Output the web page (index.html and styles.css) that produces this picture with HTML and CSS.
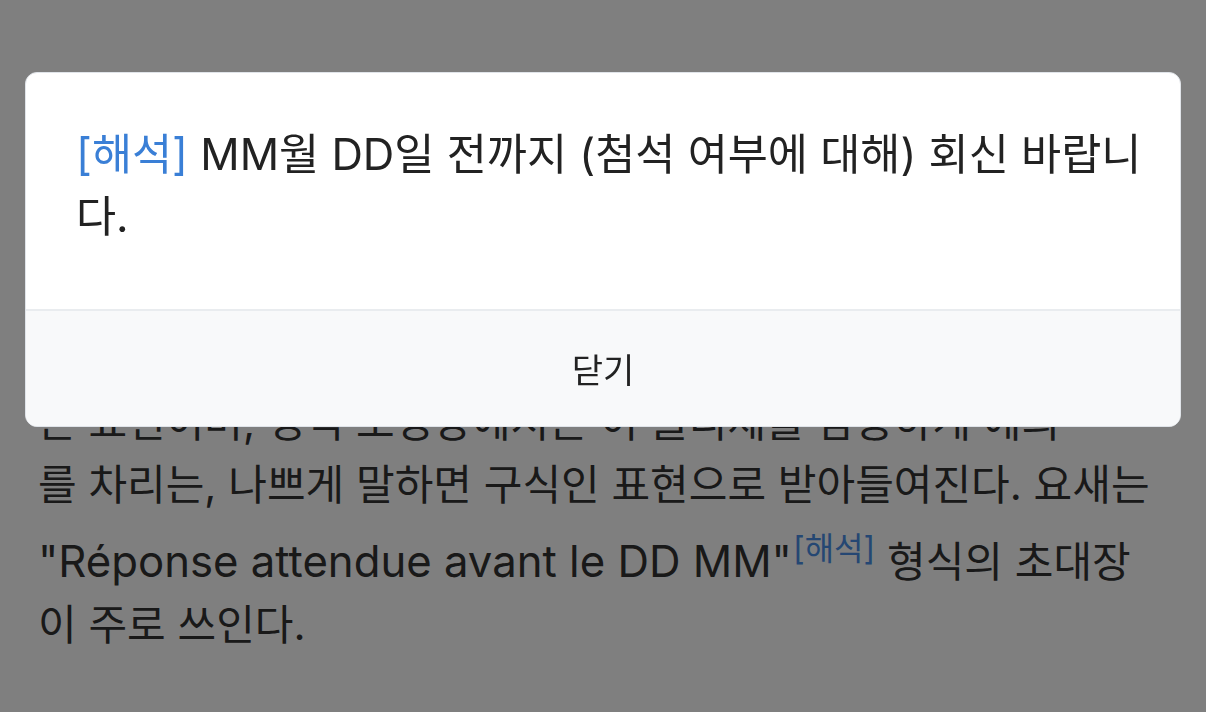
FILE: index.html
```html
<!DOCTYPE html>
<html lang="ko">

<head>
    <meta charset="UTF-8">
    <meta name="viewport" content="width=device-width, initial-scale=1.0">
    <title>RSVP</title>
    <link rel="stylesheet" href="styles.css">
</head>

<body>
    <main class="article">
        <p>영어권에서도 흔히 쓰이지만 프랑스에서는 다소 딱딱하게 느껴지</p>
        <p>는 표현이며, 정식 초청장에서는 이 클리셰를 남용하게 예의<br>를 차리는, 나쁘게 말하면 구식인 표현으로 받아들여진다. 요새는 <span lang="fr" class="fr">"Réponse attendue avant le DD MM"</span><sup><a href="#">[해석]</a></sup> 형식의 초대장이 주로 쓰인다.</p>
    </main>

    <div class="overlay">
        <div class="modal">
            <div class="modal-body">
                <p><a href="#">[해석]</a> MM월 DD일 전까지 (첨석 여부에 대해) 회신 바랍니다.</p>
            </div>
            <div class="modal-footer">
                <button>닫기</button>
            </div>
        </div>
    </div>
</body>

</html>
```

FILE: styles.css
```css
* {
    padding: 0;
    margin: 0;
    box-sizing: border-box;
}

body {
    font-family: Inter, 'Noto Sans CJK KR', sans-serif;
    background: #fff;
    color: #333;
}

a {
    color: #4a8fe6;
    text-decoration: none;
}

.article {
    padding: 327px 50px 0 38px;
}

.article p {
    font-size: 42px;
    line-height: 63px;
}

.article .fr {
    font-size: 1.04em;
}

.article sup {
    font-size: 32px;
    line-height: 66px;
    vertical-align: 17px;
    margin-left: 1px;
}

.overlay {
    position: fixed;
    inset: 0;
    background: rgba(0, 0, 0, 0.5);
    padding: 72px 25px;
}

.modal {
    background: #fff;
    border: 1px solid #e0e4e9;
    border-radius: 12px;
    overflow: hidden;
}

.modal-body {
    padding: 51px 30px 61px 50px;
    font-size: 43.6px;
    line-height: 62px;
    color: #222;
}

.modal-body a {
    color: #3a7fd6;
}

.modal-footer {
    background: #f8f9fa;
    border-top: 2px solid #e9ecef;
    height: 117px;
    display: flex;
    align-items: center;
    justify-content: center;
}

.modal-footer button {
    border: none;
    background: none;
    font-family: inherit;
    font-size: 34px;
    color: #222;
}
```
